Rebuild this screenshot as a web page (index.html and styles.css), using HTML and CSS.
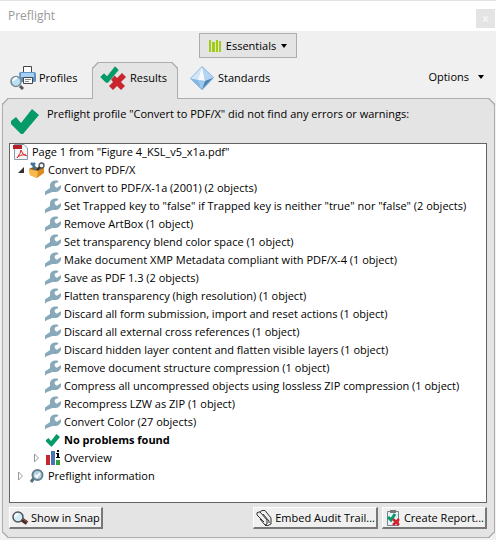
FILE: index.html
```html
<!DOCTYPE html>
<html lang="en">
<head>
<meta charset="utf-8">
<title>Preflight</title>
<link rel="stylesheet" href="styles.css">
</head>
<body>
<svg class="defs" aria-hidden="true">
  <symbol id="wrench" viewBox="0 0 16 16">
    <path fill="#87a9b9" d="M0 15.500V11.500L5 8V4.500Q6 1 9.500 .5H12.500L13.500 2L10 3.500L9.500 5.500L11 7.500L12.500 7.500L15 5.500H16V8Q14 12 10.500 12H7L5 13L2 14Z"/>
  </symbol>
  <symbol id="check" viewBox="0 0 28 26">
    <path fill="#059b68" d="M0 12L5 8L10 14L21 0L28 6L12 25H10L0 15Z"/>
  </symbol>
  <symbol id="closed" viewBox="0 0 8 10">
    <path fill="#fff" stroke="#999" d="M.5 1V9L4.500 5Z"/>
  </symbol>
</svg>
<main class="window">
  <header class="titlebar">
    <h1>Preflight</h1>
    <button class="close" type="button" aria-label="Close">x</button>
  </header>
  <div class="toolbar">
    <button class="essentials" type="button">
      <svg width="12" height="12" viewBox="0 0 12 12"><path fill="#a0cd12" d="M0 0H2V12H0ZM3 2H6V12H3ZM7 0H9V12H7ZM10 1H12V12H10Z"/></svg>
      <span>Essentials</span>
      <svg width="6" height="4" viewBox="0 0 6 4"><path d="M0 0H6L3 4Z"/></svg>
    </button>
  </div>
  <nav class="tabs">
    <button class="tab profiles" type="button">
      <svg width="26" height="24" viewBox="0 0 26 24">
        <path d="M13.500 .5H21.500V7H13.500Z" fill="#fff" stroke="#444"/>
        <path d="M9 8Q9 6 11 6H24Q26 6 26 8V15Q26 16 24 16H10Z" fill="#5d92c5"/><path d="M11 7H24V11H11Z" fill="#a7d0f2"/>
        <path d="M13.500 11.500H22.500V17.500H13.500Z" fill="#fff" stroke="#444"/><path d="M15 13.500H21M15 15.500H19" stroke="#888"/>
        <path d="M10 20L13 23" stroke="#555" stroke-width="3"/>
        <circle cx="6" cy="15.500" r="5" fill="#b8e0f4" stroke="#7d8a92" stroke-width="1.600"/><path d="M3 15Q4 12 7 12" stroke="#fff" stroke-width="2" fill="none"/>
      </svg>Profiles
    </button>
    <button class="tab results" type="button" aria-current="page">
      <svg width="26" height="25" viewBox="0 0 26 25">
        <path fill="#c9252f" d="M10 12L13 8L17 12L22 7L26 11L21 16L25 20L21 24L17 20L13 24L9 20L13 16Z"/>
        <path fill="#059b68" stroke="#e4e4e4" stroke-width=".5" d="M0 11L4 7L7 10L15 0L19 4L8 17H6Z"/>
      </svg>Results
    </button>
    <button class="tab standards" type="button">
      <svg width="24" height="24" viewBox="0 0 24 24">
        <path fill="#a6cdee" d="M12 0L24 11.500L12 24L0 12.500Z"/>
        <path fill="#d3e6f8" d="M12 0L8 14L0 12.500Z"/>
        <path fill="#f3f9ff" d="M12 0L8 14L15 15Z"/>
        <path fill="#b4d4f1" d="M12 0L24 11.500L15 15Z"/>
        <path fill="#84b6e3" d="M0 12.500L8 14L12 24Z"/>
        <path fill="#9bc7ec" d="M8 14L15 15L12 24Z"/>
        <path fill="#4f82b3" d="M24 11.500L15 15L12 24Z"/>
        <path fill="none" stroke="#8db9e0" stroke-width=".8" d="M12 .5L23.500 11.500L12 23.500L.5 12.500Z"/>
      </svg>Standards
    </button>
    <button class="options" type="button">Options
      <svg width="6" height="4" viewBox="0 0 6 4"><path d="M0 0H6L3 4Z"/></svg>
    </button>
  </nav>
  <section class="panel">
    <div class="summary">
      <svg width="28" height="26"><use href="#check"/></svg>
      <p>Preflight profile "Convert to PDF/X" did not find any errors or warnings:</p>
    </div>
    <ul class="tree">
      <li class="row root">
        <svg width="16" height="16" viewBox="0 0 16 16"><path fill="#f3f6f8" stroke="#889ba8" d="M1.500 .5H11L14.500 4V15.500H1.500Z"/><path fill="#b51f28" d="M0 1H9V5H0Z"/><path d="M4 14Q8 9 8 6Q9 11 14 12M4 14Q7 10 13 11" fill="none" stroke="#e02027"/></svg>
        Page 1 from "Figure 4_KSL_v5_x1a.pdf"
      </li>
      <li class="row branch">
        <svg width="8" height="10" viewBox="0 0 8 10"><path fill="#333" d="M6 2V8H0Z"/></svg>
        <svg width="16" height="16" viewBox="0 0 16 16"><path fill="#dc8b1c" d="M0 7L9 9L15 6V11L8 16L1 13Z"/><path fill="#f7b94c" d="M0 7L9 9L8 16L1 13Z"/><path fill="#8a5a1d" d="M0 7L4 5L15 6L9 9Z"/><path d="M2 1L4 3L6 1M4 3L7 7" stroke="#41739b" stroke-width="2.500" fill="none"/><circle cx="12.500" cy="3.500" r="2.500" fill="#edf5f8" stroke="#4c5359" stroke-width="1.300"/><path d="M11 5L8 8" stroke="#333" stroke-width="2"/></svg>
        Convert to PDF/X
      </li>
      <li class="row leaf"><svg width="16" height="16"><use href="#wrench"/></svg>Convert to PDF/X-1a (2001) (2 objects)</li>
      <li class="row leaf"><svg width="16" height="16"><use href="#wrench"/></svg>Set Trapped key to "false" if Trapped key is neither "true" nor "false" (2 objects)</li>
      <li class="row leaf"><svg width="16" height="16"><use href="#wrench"/></svg>Remove ArtBox (1 object)</li>
      <li class="row leaf"><svg width="16" height="16"><use href="#wrench"/></svg>Set transparency blend color space (1 object)</li>
      <li class="row leaf"><svg width="16" height="16"><use href="#wrench"/></svg>Make document XMP Metadata compliant with PDF/X-4 (1 object)</li>
      <li class="row leaf"><svg width="16" height="16"><use href="#wrench"/></svg>Save as PDF 1.3 (2 objects)</li>
      <li class="row leaf"><svg width="16" height="16"><use href="#wrench"/></svg>Flatten transparency (high resolution) (1 object)</li>
      <li class="row leaf"><svg width="16" height="16"><use href="#wrench"/></svg>Discard all form submission, import and reset actions (1 object)</li>
      <li class="row leaf"><svg width="16" height="16"><use href="#wrench"/></svg>Discard all external cross references (1 object)</li>
      <li class="row leaf"><svg width="16" height="16"><use href="#wrench"/></svg>Discard hidden layer content and flatten visible layers (1 object)</li>
      <li class="row leaf"><svg width="16" height="16"><use href="#wrench"/></svg>Remove document structure compression (1 object)</li>
      <li class="row leaf"><svg width="16" height="16"><use href="#wrench"/></svg>Compress all uncompressed objects using lossless ZIP compression (1 object)</li>
      <li class="row leaf"><svg width="16" height="16"><use href="#wrench"/></svg>Recompress LZW as ZIP (1 object)</li>
      <li class="row leaf"><svg width="16" height="16"><use href="#wrench"/></svg>Convert Color (27 objects)</li>
      <li class="row leaf strong"><svg width="16" height="13"><use href="#check"/></svg>No problems found</li>
      <li class="row subbranch">
        <svg width="8" height="10"><use href="#closed"/></svg>
        <svg width="16" height="16" viewBox="0 0 16 16"><path fill="#c9252f" d="M1 5H5V15H1Z"/><path fill="#4774b5" d="M6 1H10V15H6Z"/><path fill="#35a13a" d="M11 10H15V15H11Z"/><path d="M12 0H14V2H12ZM11 3H14V7H15V8H11V7H12V4H11Z"/></svg>
        Overview
      </li>
      <li class="row branch">
        <svg width="8" height="10"><use href="#closed"/></svg>
        <svg width="16" height="16" viewBox="0 0 16 16"><path d="M5 10L2 14" stroke="#57707f" stroke-width="3"/><circle cx="8.500" cy="7" r="5" fill="#b5d2df" stroke="#64808f" stroke-width="2"/><path d="M6 7L8 9L11 5" fill="none" stroke="#fff" stroke-width="1.800"/></svg>
        Preflight information
      </li>
    </ul>
    <footer class="actions">
      <button type="button" class="action snap">
        <svg width="16" height="16" viewBox="0 0 16 16"><path d="M9 9L15 13" stroke="#4b2920" stroke-width="4"/><path d="M11 9L15 12" stroke="#a45743"/><circle cx="6" cy="7" r="5" fill="#d3edf7" stroke="#4c5358" stroke-width="1.500"/><path d="M3 7Q3 4 6 4" fill="none" stroke="#fff" stroke-width="2"/></svg>Show in Snap
      </button>
      <button type="button" class="action">
        <svg width="16" height="16" viewBox="0 0 16 16" fill="none" stroke="#333"><path d="M8 12L1 5Q0 2 3 2H4L11 10V14L9 15L4 9M4 2L6 .5H9L15 8V14L12 15.500H9M7 4L13 11V13"/></svg>Embed Audit Trail...
      </button>
      <button type="button" class="action">
        <svg width="16" height="16" viewBox="0 0 16 16"><path fill="#e7f3fa" stroke="#73828c" d="M2.500 1.500H13.500V15.500H2.500Z"/><path fill="#777" d="M5 0H11V3H5Z"/><path d="M3 7L6 10L10 4" fill="none" stroke="#059b68" stroke-width="3"/><path d="M8 9L14 15M14 9L8 15" stroke="#d5202b" stroke-width="2.500"/></svg>Create Report...
      </button>
    </footer>
  </section>
</main>
</body>
</html>
```
FILE: styles.css
```css
* { box-sizing: border-box; }
body {
  margin: 0;
  background: #f0f0f0;
  color: #000;
  font: 11px/18px "Open Sans", "Noto Sans", sans-serif;
}
button {
  margin: 0;
  padding: 0;
  border: 0;
  background: none;
  color: inherit;
  font: inherit;
  white-space: nowrap;
}
svg { flex: none; }
.defs { position: absolute; width: 0; height: 0; }
.window { display: flex; flex-direction: column; min-height: 100vh; }
.titlebar {
  display: flex;
  align-items: center;
  justify-content: space-between;
  height: 31px;
  padding: 0 1px 0 8px;
  border-top: 1px solid #e2e2e2;
  background: #fff;
}
.titlebar h1 { margin: 0; font-size: 12px; font-weight: 400; color: #999; }
.close {
  width: 19px;
  height: 19px;
  margin-top: 4px;
  background: #e4e4e4;
  color: #f4f4f4;
  font-weight: 700;
  line-height: 16px;
}
.toolbar { display: flex; justify-content: center; padding-top: 2px; }
.essentials {
  display: flex;
  align-items: center;
  gap: 5px;
  height: 25px;
  padding: 0 9px;
  border: 1px solid #adadad;
  background: #e4e4e4;
}
.tabs { display: flex; align-items: flex-end; padding: 4px 12px 0 10px; }
.tab { display: flex; align-items: center; gap: 4px; height: 36px; padding-bottom: 4px; }
.profiles { width: 82px; gap: 3px; }
.results {
  position: relative;
  width: 86px;
  height: 37px;
  margin-bottom: -1px;
  padding: 0 7px 6px;
  border: 1px solid #adadad;
  border-bottom: 0;
  border-radius: 6px 6px 0 0;
  corner-shape: bevel;
  background: #e4e4e4;
}
.standards { margin-left: 12px; }
.options { display: flex; align-items: center; gap: 9px; height: 36px; margin-left: auto; padding-bottom: 7px; }
.panel {
  display: flex;
  flex: 1;
  flex-direction: column;
  margin: 0 1px 2px 2px;
  padding: 0 7px 8px 6px;
  border: 1px solid #adadad;
  border-radius: 6px;
  corner-shape: bevel;
  background: #e4e4e4;
}
.summary { display: flex; align-items: flex-start; gap: 8px; height: 44px; padding: 6px 0 0 2px; }
.summary svg { margin-top: 4px; }
.summary p { margin: 0; }
.tree {
  flex: 1;
  margin: 0;
  padding: 0;
  border: 1px solid #646464;
  background: #fff;
  list-style: none;
}
.row { display: flex; align-items: center; gap: 3px; height: 18px; padding-bottom: 2px; white-space: nowrap; }
.root { padding-left: 3px; }
.branch { padding-left: 8px; }
.subbranch { padding-left: 24px; }
.leaf { padding-left: 35px; }
.strong { font-weight: 700; }
.actions { display: flex; gap: 4px; padding-top: 4px; }
.action {
  display: flex;
  align-items: center;
  gap: 3px;
  height: 22px;
  padding: 0 1px 0 2px;
  border: 1px solid #fff;
  border-right: 2px solid #777;
  border-bottom: 2px solid #777;
  background: #f0f0f0;
}
.snap { margin-right: auto; }
```
